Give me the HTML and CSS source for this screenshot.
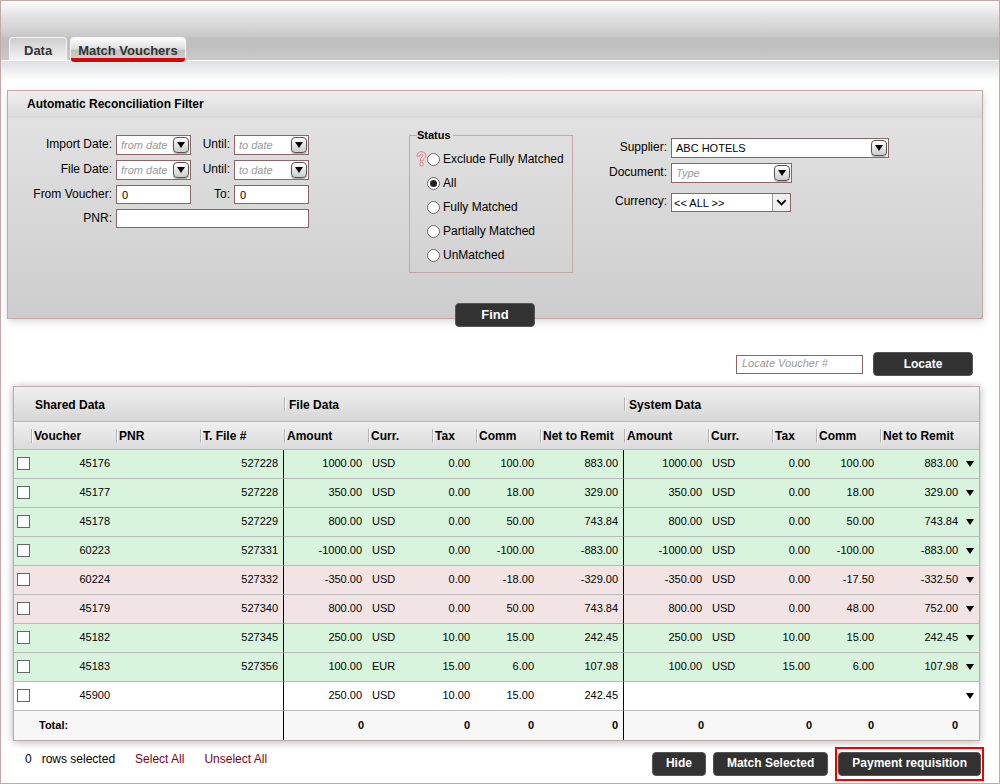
FILE: index.html
```html
<!DOCTYPE html>
<html lang="en">

<head>
    <meta charset="UTF-8">
    <title>Match Vouchers</title>
    <link rel="stylesheet" href="styles.css">
</head>

<body>
    <header id="top">
        <nav class="tabs">
            <a href="#data" class="tab">Data</a>
            <a href="#match" class="tab active">Match Vouchers</a>
        </nav>
    </header>
    <div class="top_fade"></div>

    <form id="filter">
        <h2>Automatic Reconciliation Filter</h2>
        <div class="filter_body">
            <div class="dates">
                <label for="imp_from">Import Date:</label>
                <div class="combo"><input type="text" id="imp_from" placeholder="from date"><button type="button" class="drop" aria-label="Open"></button></div>
                <label for="imp_to">Until:</label>
                <div class="combo"><input type="text" id="imp_to" placeholder="to date"><button type="button" class="drop" aria-label="Open"></button></div>

                <label for="file_from">File Date:</label>
                <div class="combo"><input type="text" id="file_from" placeholder="from date"><button type="button" class="drop" aria-label="Open"></button></div>
                <label for="file_to">Until:</label>
                <div class="combo"><input type="text" id="file_to" placeholder="to date"><button type="button" class="drop" aria-label="Open"></button></div>

                <label for="v_from">From Voucher:</label>
                <input type="text" id="v_from" class="box" value="0">
                <label for="v_to">To:</label>
                <input type="text" id="v_to" class="box" value="0">

                <label for="pnr">PNR:</label>
                <input type="text" id="pnr" class="box wide">
            </div>

            <fieldset class="status">
                <legend>Status</legend>
                <div class="radio">
                    <svg class="help" width="11" height="16" viewBox="0 0 11 16">
                        <path d="M1.2 5.2C.6 2.2 3 .8 5.4.8c2.600 0 4.400 1.500 4.400 3.600 0 1.900-1.300 2.800-2.300 3.600-.5.400-.7.800-.7 2H4.200c0-2 .5-2.800 1.500-3.700.9-.8 1.300-1.200 1.300-1.900 0-.8-.6-1.300-1.500-1.300-1.100 0-1.600.7-1.500 1.800z" />
                        <circle cx="5.500" cy="13.200" r="1.800" />
                    </svg>
                    <input type="radio" name="status" id="st_ex"><label for="st_ex">Exclude Fully Matched</label>
                </div>
                <div class="radio"><input type="radio" name="status" id="st_all" checked><label for="st_all">All</label></div>
                <div class="radio"><input type="radio" name="status" id="st_full"><label for="st_full">Fully Matched</label></div>
                <div class="radio"><input type="radio" name="status" id="st_part"><label for="st_part">Partially Matched</label></div>
                <div class="radio"><input type="radio" name="status" id="st_un"><label for="st_un">UnMatched</label></div>
            </fieldset>

            <div class="source">
                <label for="supplier">Supplier:</label>
                <div class="combo supplier"><input type="text" id="supplier" value="ABC HOTELS"><button type="button" class="drop" aria-label="Open"></button></div>
                <label for="doc">Document:</label>
                <div class="combo doc"><input type="text" id="doc" placeholder="Type"><button type="button" class="drop" aria-label="Open"></button></div>
                <label for="currency">Currency:</label>
                <div class="select">
                    <select id="currency">
                        <option>&lt;&lt; ALL &gt;&gt;</option>
                    </select>
                    <svg width="18" height="17" viewBox="0 0 18 17"><path d="M4.500 6l4.500 4.500L13.500 6" /></svg>
                </div>
            </div>
        </div>
        <button type="submit" class="btn find">Find</button>
    </form>

    <form id="locate">
        <input type="text" class="box" placeholder="Locate Voucher #" aria-label="Locate Voucher #">
        <button type="submit" class="btn">Locate</button>
    </form>

    <table id="vouchers">
        <colgroup>
            <col class="c_check"><col class="c_voucher"><col class="c_wide"><col class="c_wide">
            <col class="c_wide"><col class="c_mid"><col class="c_tax"><col class="c_mid"><col class="c_wide">
            <col class="c_wide"><col class="c_mid"><col class="c_tax"><col class="c_mid"><col class="c_wide">
            <col class="c_arrow">
        </colgroup>
        <thead>
            <tr class="groups">
                <th colspan="4" class="shared">Shared Data</th>
                <th colspan="5" class="sep">File Data</th>
                <th colspan="6" class="sep">System Data</th>
            </tr>
            <tr class="names">
                <th></th>
                <th class="sep">Voucher</th>
                <th class="sep">PNR</th>
                <th class="sep">T. File #</th>
                <th class="sep">Amount</th>
                <th class="sep">Curr.</th>
                <th class="sep">Tax</th>
                <th class="sep">Comm</th>
                <th class="sep">Net to Remit</th>
                <th class="sep">Amount</th>
                <th class="sep">Curr.</th>
                <th class="sep">Tax</th>
                <th class="sep">Comm</th>
                <th class="sep" colspan="2">Net to Remit</th>
            </tr>
        </thead>
        <tbody>
            <tr class="ok">
                <td class="chk"><input type="checkbox" aria-label="45176"></td>
                <td>45176</td><td></td><td class="end">527228</td>
                <td>1000.00</td><td class="cur">USD</td><td>0.00</td><td>100.00</td><td class="end">883.00</td>
                <td>1000.00</td><td class="cur">USD</td><td>0.00</td><td>100.00</td><td>883.00</td>
                <td class="more"><button type="button" aria-label="More"></button></td>
            </tr>
            <tr class="ok">
                <td class="chk"><input type="checkbox" aria-label="45177"></td>
                <td>45177</td><td></td><td class="end">527228</td>
                <td>350.00</td><td class="cur">USD</td><td>0.00</td><td>18.00</td><td class="end">329.00</td>
                <td>350.00</td><td class="cur">USD</td><td>0.00</td><td>18.00</td><td>329.00</td>
                <td class="more"><button type="button" aria-label="More"></button></td>
            </tr>
            <tr class="ok">
                <td class="chk"><input type="checkbox" aria-label="45178"></td>
                <td>45178</td><td></td><td class="end">527229</td>
                <td>800.00</td><td class="cur">USD</td><td>0.00</td><td>50.00</td><td class="end">743.84</td>
                <td>800.00</td><td class="cur">USD</td><td>0.00</td><td>50.00</td><td>743.84</td>
                <td class="more"><button type="button" aria-label="More"></button></td>
            </tr>
            <tr class="ok">
                <td class="chk"><input type="checkbox" aria-label="60223"></td>
                <td>60223</td><td></td><td class="end">527331</td>
                <td>-1000.00</td><td class="cur">USD</td><td>0.00</td><td>-100.00</td><td class="end">-883.00</td>
                <td>-1000.00</td><td class="cur">USD</td><td>0.00</td><td>-100.00</td><td>-883.00</td>
                <td class="more"><button type="button" aria-label="More"></button></td>
            </tr>
            <tr class="diff">
                <td class="chk"><input type="checkbox" aria-label="60224"></td>
                <td>60224</td><td></td><td class="end">527332</td>
                <td>-350.00</td><td class="cur">USD</td><td>0.00</td><td>-18.00</td><td class="end">-329.00</td>
                <td>-350.00</td><td class="cur">USD</td><td>0.00</td><td>-17.50</td><td>-332.50</td>
                <td class="more"><button type="button" aria-label="More"></button></td>
            </tr>
            <tr class="diff">
                <td class="chk"><input type="checkbox" aria-label="45179"></td>
                <td>45179</td><td></td><td class="end">527340</td>
                <td>800.00</td><td class="cur">USD</td><td>0.00</td><td>50.00</td><td class="end">743.84</td>
                <td>800.00</td><td class="cur">USD</td><td>0.00</td><td>48.00</td><td>752.00</td>
                <td class="more"><button type="button" aria-label="More"></button></td>
            </tr>
            <tr class="ok">
                <td class="chk"><input type="checkbox" aria-label="45182"></td>
                <td>45182</td><td></td><td class="end">527345</td>
                <td>250.00</td><td class="cur">USD</td><td>10.00</td><td>15.00</td><td class="end">242.45</td>
                <td>250.00</td><td class="cur">USD</td><td>10.00</td><td>15.00</td><td>242.45</td>
                <td class="more"><button type="button" aria-label="More"></button></td>
            </tr>
            <tr class="ok">
                <td class="chk"><input type="checkbox" aria-label="45183"></td>
                <td>45183</td><td></td><td class="end">527356</td>
                <td>100.00</td><td class="cur">EUR</td><td>15.00</td><td>6.00</td><td class="end">107.98</td>
                <td>100.00</td><td class="cur">USD</td><td>15.00</td><td>6.00</td><td>107.98</td>
                <td class="more"><button type="button" aria-label="More"></button></td>
            </tr>
            <tr>
                <td class="chk"><input type="checkbox" aria-label="45900"></td>
                <td>45900</td><td></td><td class="end"></td>
                <td>250.00</td><td class="cur">USD</td><td>10.00</td><td>15.00</td><td class="end">242.45</td>
                <td></td><td></td><td></td><td></td><td></td>
                <td class="more"><button type="button" aria-label="More"></button></td>
            </tr>
        </tbody>
        <tfoot>
            <tr>
                <td colspan="4" class="total end">Total:</td>
                <td class="near">0</td><td></td><td>0</td><td>0</td><td class="end">0</td>
                <td class="near">0</td><td></td><td class="near">0</td><td>0</td><td>0</td>
                <td></td>
            </tr>
        </tfoot>
    </table>

    <footer id="actions">
        <span class="count">0</span>
        <span class="rows">rows selected</span>
        <a href="#all">Select All</a>
        <a href="#none">Unselect All</a>
        <div class="btns">
            <button type="button" class="btn">Hide</button>
            <button type="button" class="btn">Match Selected</button>
            <div class="mark"><button type="button" class="btn">Payment requisition</button></div>
        </div>
    </footer>
</body>

</html>
```
FILE: styles.css
```css
* {
    margin: 0;
    padding: 0;
    box-sizing: border-box;
}

body {
    min-height: 100vh;
    border: 1px solid #c4a8a8;
    background: #fff;
    color: #000;
    font: 12px/14px "Liberation Sans", Arial, sans-serif;
}

input,
select,
button {
    font-family: inherit;
    color: #000;
}

/* top bar */
#top {
    height: 60px;
    border-bottom: 1px solid #fff;
    background: linear-gradient(#fdfdfd 0, #e2e2e2 15px, #d3d3d3 28px, #c6c6c6 36px, #bfbfbf 37px, #c0c0c0 46px, #cacaca 59px);
}

.tabs {
    display: flex;
    gap: 3px;
    padding: 36px 8px 0;
}

.tab {
    height: 23px;
    padding: 5px 14px 0;
    border: 1px solid #f4f4f4;
    border-bottom: none;
    border-radius: 4px 4px 0 0;
    background: linear-gradient(#cdcdcd, #f3f3f3);
    color: #333;
    font-size: 13px;
    font-weight: bold;
    line-height: 16px;
    text-decoration: none;
}

.tab.active {
    height: 26px;
    padding: 5px 7px 0;
    border-bottom: 1px solid #fff;
    border-radius: 4px;
    background: linear-gradient(#fdfdfd 0, #dedede 11px, #c0c0c0 12px, #cfcfcf 20px, #e00000 20px);
}

.top_fade {
    height: 20px;
    background: linear-gradient(#dce0e3, #fff);
}

/* filter */
#filter {
    position: relative;
    margin: 9px 16px 0 6px;
    border: 1px solid #c4a8a8;
    background: linear-gradient(#e4e4e4, #cdcdcd);
    box-shadow: 1px 3px 8px rgba(0, 0, 0, 0.15);
}

#filter h2 {
    height: 27px;
    padding: 6px 19px 0;
    background: linear-gradient(#efefef, #dadada);
    font-size: 12px;
    line-height: 14px;
}

.filter_body {
    display: flex;
    align-items: flex-start;
    padding: 10px 0 45px;
}

.dates {
    display: grid;
    grid-template-columns: 104px 75px 35px 75px;
    grid-template-rows: 20px 20px 19px 19px;
    gap: 5px 4px;
    margin-top: 7px;
}

.dates label,
.source label {
    padding-top: 2px;
    text-align: right;
}

.box {
    width: 100%;
    height: 19px;
    padding: 0 5px;
    border: 1px solid #8a6466;
    background: #fff;
    font-size: 11px;
}

.wide {
    grid-column: 2 / 5;
}

.combo {
    display: flex;
    align-items: center;
    height: 20px;
    padding: 0 1px 0 4px;
    border: 1px solid #8a6466;
    background: #fff;
}

.combo input {
    flex: 1;
    width: 0;
    height: 18px;
    border: none;
    outline: none;
    background: none;
    font-size: 11px;
}

::placeholder {
    color: #999;
    font-style: italic;
}

.drop {
    display: flex;
    align-items: center;
    justify-content: center;
    width: 16px;
    height: 16px;
    border: 1px solid #555;
    border-radius: 4px;
    background: linear-gradient(#fff, #ccc);
    box-shadow: 0 1px 1px #aaa;
}

.drop::before,
.more button::before {
    content: "";
    border-top: 6px solid #000;
    border-left: 4px solid transparent;
    border-right: 4px solid transparent;
}

.status {
    width: 164px;
    margin-left: 100px;
    padding: 5px 0 5px 17px;
    border: 1px solid #c4a8a8;
}

.status legend {
    margin-left: -10px;
    padding-right: 2px;
    font-size: 11px;
    font-weight: bold;
}

.radio {
    display: flex;
    align-items: center;
    height: 24px;
    white-space: nowrap;
}

.radio input {
    display: flex;
    align-items: center;
    justify-content: center;
    width: 13px;
    height: 13px;
    margin-right: 3px;
    border: 1px solid #666;
    border-radius: 50%;
    background: #fff;
    appearance: none;
}

.radio input:checked::before {
    content: "";
    width: 7px;
    height: 7px;
    border-radius: 50%;
    background: #222;
}

.help {
    flex: none;
    margin-left: -11px;
    fill: #f7dede;
    stroke: #dc7a80;
}

.source {
    display: grid;
    grid-template-columns: 66px auto;
    grid-template-rows: 20px 20px 24px;
    gap: 5px 4px;
    margin: 10px 0 0 28px;
}

.supplier {
    width: 218px;
}

.doc {
    width: 121px;
}

.select {
    display: flex;
    align-self: end;
    width: 120px;
    height: 19px;
    border: 1px solid #8a6466;
    background: #fff;
}

.source label:nth-of-type(3) {
    padding-top: 6px;
}

.select select {
    flex: 1;
    padding-left: 2px;
    border: none;
    background: none;
    font-size: 11px;
    appearance: none;
}

.select svg {
    border-left: 1px solid #999;
    background: #f0f0f0;
    fill: none;
    stroke: #000;
    stroke-width: 2;
}

.btn {
    height: 24px;
    padding: 0 13px 2px;
    border: 1px solid #555;
    border-radius: 4px;
    background: #323232;
    color: #fff;
    font-size: 12px;
    font-weight: bold;
}

.find {
    position: absolute;
    bottom: -9px;
    left: 50%;
    width: 80px;
    margin-left: -40px;
    font-size: 13px;
}

/* locate */
#locate {
    display: flex;
    align-items: center;
    justify-content: flex-end;
    gap: 10px;
    margin: 33px 26px 10px;
}

#locate .box {
    width: 127px;
    padding-bottom: 2px;
}

#locate .btn {
    width: 100px;
    padding-bottom: 0;
}

/* table */
#vouchers {
    width: calc(100% - 31px);
    margin-left: 12px;
    border: 1px solid #c4a8a8;
    border-spacing: 0;
    table-layout: fixed;
    background: #fff;
    box-shadow: 0 1px 8px rgba(0, 0, 0, 0.3);
    font-size: 11px;
}

.c_check {
    width: 17px;
}

.c_voucher {
    width: 85px;
}

.c_wide {
    width: 84px;
}

.c_mid {
    width: 64px;
}

.c_tax {
    width: 44px;
}

.c_arrow {
    width: 15px;
}

#vouchers th {
    border-bottom: 1px solid #bbb;
    font-size: 12px;
    text-align: left;
    white-space: nowrap;
}

.groups {
    height: 35px;
    background: linear-gradient(#efefef, #d6d6d6);
}

.names {
    height: 28px;
    background: linear-gradient(#efefef, #dadada);
}

#vouchers .groups th {
    padding: 2px 0 0 5px;
}

#vouchers .groups .shared {
    padding-left: 21px;
}

.names th {
    padding-left: 3px;
}

.sep {
    background: linear-gradient(90deg, #b4b4b4 1px, #fff 1px) no-repeat 0 50% / 2px 14px;
}

#vouchers td {
    height: 29px;
    padding: 0 6px 2px 0;
    border-bottom: 1px solid #bbb;
    text-align: right;
}

#vouchers .end {
    padding-right: 5px;
    border-right: 1px solid #000;
}

#vouchers .cur {
    padding-left: 4px;
    text-align: left;
}

.ok {
    background: #d8f4dc;
}

.diff {
    background: #f2e4e4;
}

#vouchers .chk {
    padding: 0 0 2px 3px;
}

.chk input {
    display: block;
    width: 13px;
    height: 13px;
    border: 1px solid #666;
    background: #fff;
    appearance: none;
}

.chk input:checked {
    background: #666;
}

#vouchers .more {
    padding: 0;
}

.more button {
    display: flex;
    padding: 0 2px;
    border: none;
    background: none;
}

#vouchers tfoot td {
    border-bottom: none;
    background: #f7f7f7;
    font-weight: bold;
    padding-bottom: 1px;
}

#vouchers .near {
    padding-right: 4px;
}

#vouchers .total {
    padding-left: 25px;
    text-align: left;
}

/* bottom */
#actions {
    display: flex;
    align-items: flex-start;
    margin: 6px 15px 0 24px;
    line-height: 24px;
}

#actions a {
    margin-left: 20px;
    color: #800010;
    text-decoration: none;
}

.count {
    margin-right: 10px;
}

.btns {
    display: flex;
    align-items: center;
    gap: 7px;
    margin-left: auto;
}

.mark {
    display: flex;
    padding: 3px 1px;
    border: 2px solid #f00000;
}
```
